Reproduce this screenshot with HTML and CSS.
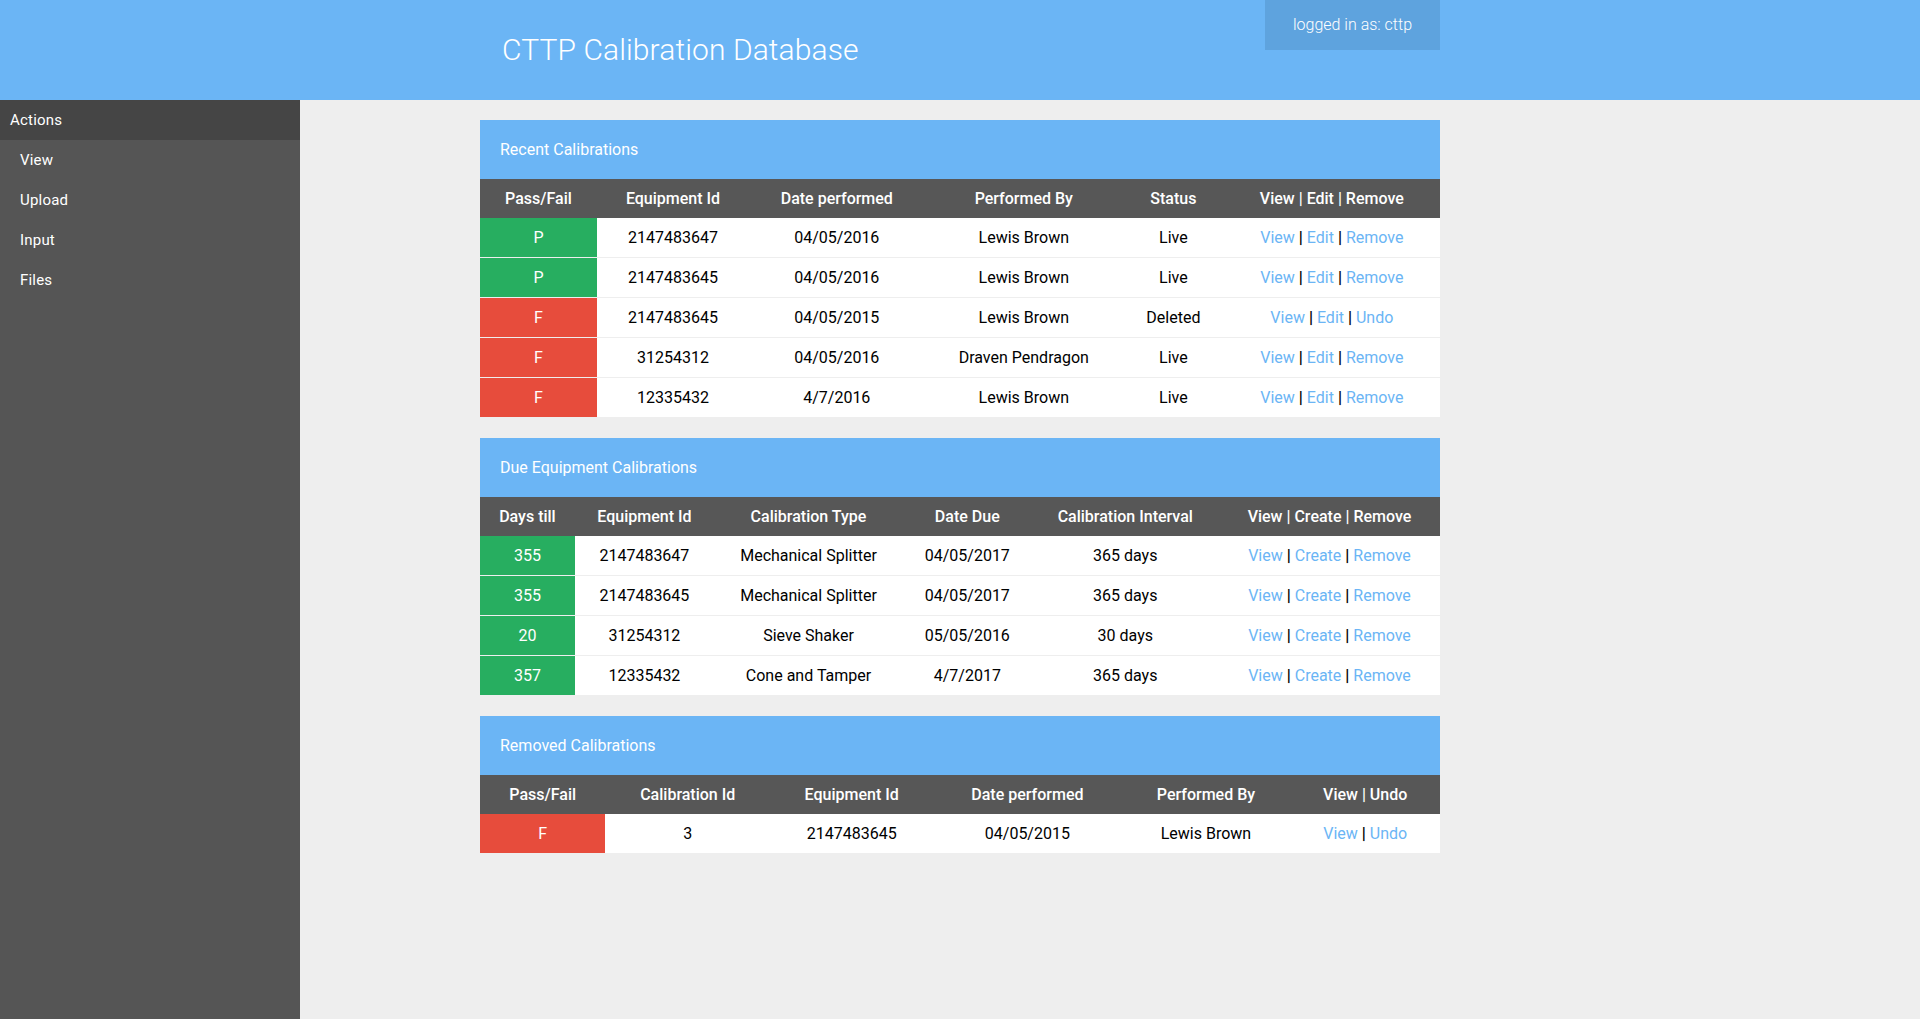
FILE: index.html
```html
<!DOCTYPE html>
<html lang="en">
<head>
<meta charset="utf-8">
<title>CTTP Calibration Database</title>
<link rel="stylesheet" href="styles.css">
</head>
<body>
<header class="topbar">
  <div class="topbar-inner">
    <h1 class="site-title">CTTP Calibration Database</h1>
    <div class="user-box">logged in as: cttp</div>
  </div>
</header>
<div class="layout">
  <nav class="sidebar">
    <div class="sidebar-head">Actions</div>
    <a class="side-link" href="#">View</a>
    <a class="side-link" href="#">Upload</a>
    <a class="side-link" href="#">Input</a>
    <a class="side-link" href="#">Files</a>
  </nav>
  <main class="content">
    <div class="container">
      <section class="card">
        <div class="card-title">Recent Calibrations</div>
        <table class="data">
          <thead>
            <tr><th>Pass/Fail</th><th>Equipment Id</th><th>Date performed</th><th>Performed By</th><th>Status</th><th>View | Edit | Remove</th></tr>
          </thead>
          <tbody>
            <tr><td class="pass">P</td><td>2147483647</td><td>04/05/2016</td><td>Lewis Brown</td><td>Live</td><td><a href="#">View</a> <b>|</b> <a href="#">Edit</a> <b>|</b> <a href="#">Remove</a></td></tr>
            <tr><td class="pass">P</td><td>2147483645</td><td>04/05/2016</td><td>Lewis Brown</td><td>Live</td><td><a href="#">View</a> <b>|</b> <a href="#">Edit</a> <b>|</b> <a href="#">Remove</a></td></tr>
            <tr><td class="fail">F</td><td>2147483645</td><td>04/05/2015</td><td>Lewis Brown</td><td>Deleted</td><td><a href="#">View</a> <b>|</b> <a href="#">Edit</a> <b>|</b> <a href="#">Undo</a></td></tr>
            <tr><td class="fail">F</td><td>31254312</td><td>04/05/2016</td><td>Draven Pendragon</td><td>Live</td><td><a href="#">View</a> <b>|</b> <a href="#">Edit</a> <b>|</b> <a href="#">Remove</a></td></tr>
            <tr><td class="fail">F</td><td>12335432</td><td>4/7/2016</td><td>Lewis Brown</td><td>Live</td><td><a href="#">View</a> <b>|</b> <a href="#">Edit</a> <b>|</b> <a href="#">Remove</a></td></tr>
          </tbody>
        </table>
      </section>
      <section class="card">
        <div class="card-title">Due Equipment Calibrations</div>
        <table class="data">
          <thead>
            <tr><th>Days till</th><th>Equipment Id</th><th>Calibration Type</th><th>Date Due</th><th>Calibration Interval</th><th>View | Create | Remove</th></tr>
          </thead>
          <tbody>
            <tr><td class="pass">355</td><td>2147483647</td><td>Mechanical Splitter</td><td>04/05/2017</td><td>365 days</td><td><a href="#">View</a> <b>|</b> <a href="#">Create</a> <b>|</b> <a href="#">Remove</a></td></tr>
            <tr><td class="pass">355</td><td>2147483645</td><td>Mechanical Splitter</td><td>04/05/2017</td><td>365 days</td><td><a href="#">View</a> <b>|</b> <a href="#">Create</a> <b>|</b> <a href="#">Remove</a></td></tr>
            <tr><td class="pass">20</td><td>31254312</td><td>Sieve Shaker</td><td>05/05/2016</td><td>30 days</td><td><a href="#">View</a> <b>|</b> <a href="#">Create</a> <b>|</b> <a href="#">Remove</a></td></tr>
            <tr><td class="pass">357</td><td>12335432</td><td>Cone and Tamper</td><td>4/7/2017</td><td>365 days</td><td><a href="#">View</a> <b>|</b> <a href="#">Create</a> <b>|</b> <a href="#">Remove</a></td></tr>
          </tbody>
        </table>
      </section>
      <section class="card">
        <div class="card-title">Removed Calibrations</div>
        <table class="data">
          <thead>
            <tr><th>Pass/Fail</th><th>Calibration Id</th><th>Equipment Id</th><th>Date performed</th><th>Performed By</th><th>View | Undo</th></tr>
          </thead>
          <tbody>
            <tr><td class="fail">F</td><td>3</td><td>2147483645</td><td>04/05/2015</td><td>Lewis Brown</td><td><a href="#">View</a> <b>|</b> <a href="#">Undo</a></td></tr>
          </tbody>
        </table>
      </section>
    </div>
  </main>
</div>
</body>
</html>
```
FILE: styles.css
```css
* { box-sizing: border-box; }
html, body { margin: 0; padding: 0; }
body {
  font-family: Roboto, "Noto Sans", "Liberation Sans", sans-serif;
  background: #eeeeee;
  color: #000;
  min-height: 100vh;
  display: flex;
  flex-direction: column;
}
.topbar {
  height: 100px;
  background: #6bb5f5;
  flex: none;
}
.topbar-inner {
  width: 960px;
  margin: 0 auto;
  height: 100%;
  display: flex;
  justify-content: space-between;
  align-items: flex-start;
}
.site-title {
  margin: 0;
  padding-left: 22px;
  font-size: 30px;
  font-weight: 300;
  line-height: 100px;
  letter-spacing: 0.1px;
  color: #fff;
}
.user-box {
  height: 50px;
  line-height: 50px;
  padding: 0 28px;
  background: #5ea3de;
  color: #fff;
  font-size: 16px;
  font-weight: 300;
}
.layout {
  flex: 1;
  display: flex;
}
.sidebar {
  width: 300px;
  flex: none;
  background: #555555;
  display: flex;
  flex-direction: column;
}
.sidebar-head {
  height: 40px;
  line-height: 40px;
  padding-left: 10px;
  background: #454545;
  color: #fff;
  font-size: 15px;
  letter-spacing: 0.2px;
}
.side-link {
  height: 40px;
  line-height: 40px;
  padding-left: 20px;
  color: #fff;
  font-size: 15px;
  letter-spacing: 0.2px;
  text-decoration: none;
}
.content {
  flex: 1;
  padding: 20px 0 20px 180px;
}
.container {
  width: 960px;
  display: flex;
  flex-direction: column;
  gap: 20px;
}
.card {
  background: #fff;
}
.card-title {
  height: 59px;
  line-height: 59px;
  padding-left: 20px;
  background: #6bb5f5;
  color: #fff;
  font-size: 16px;
}
.data {
  width: 100%;
  border-collapse: separate;
  border-spacing: 0;
  font-size: 16px;
}
.data th {
  height: 39px;
  padding: 0 12px;
  background: #575757;
  color: #fff;
  font-weight: 500;
  text-align: center;
  white-space: nowrap;
}
.data td {
  height: 40px;
  padding: 0 12px;
  line-height: 39px;
  border-bottom: 1px solid #eeeeee;
  text-align: center;
  white-space: nowrap;
}
.data td.pass { background: #27ae60; color: #fff; }
.data td.fail { background: #e74c3c; color: #fff; }
.data a { color: #6bb5f5; text-decoration: none; }
.data b { font-weight: 700; }
```
